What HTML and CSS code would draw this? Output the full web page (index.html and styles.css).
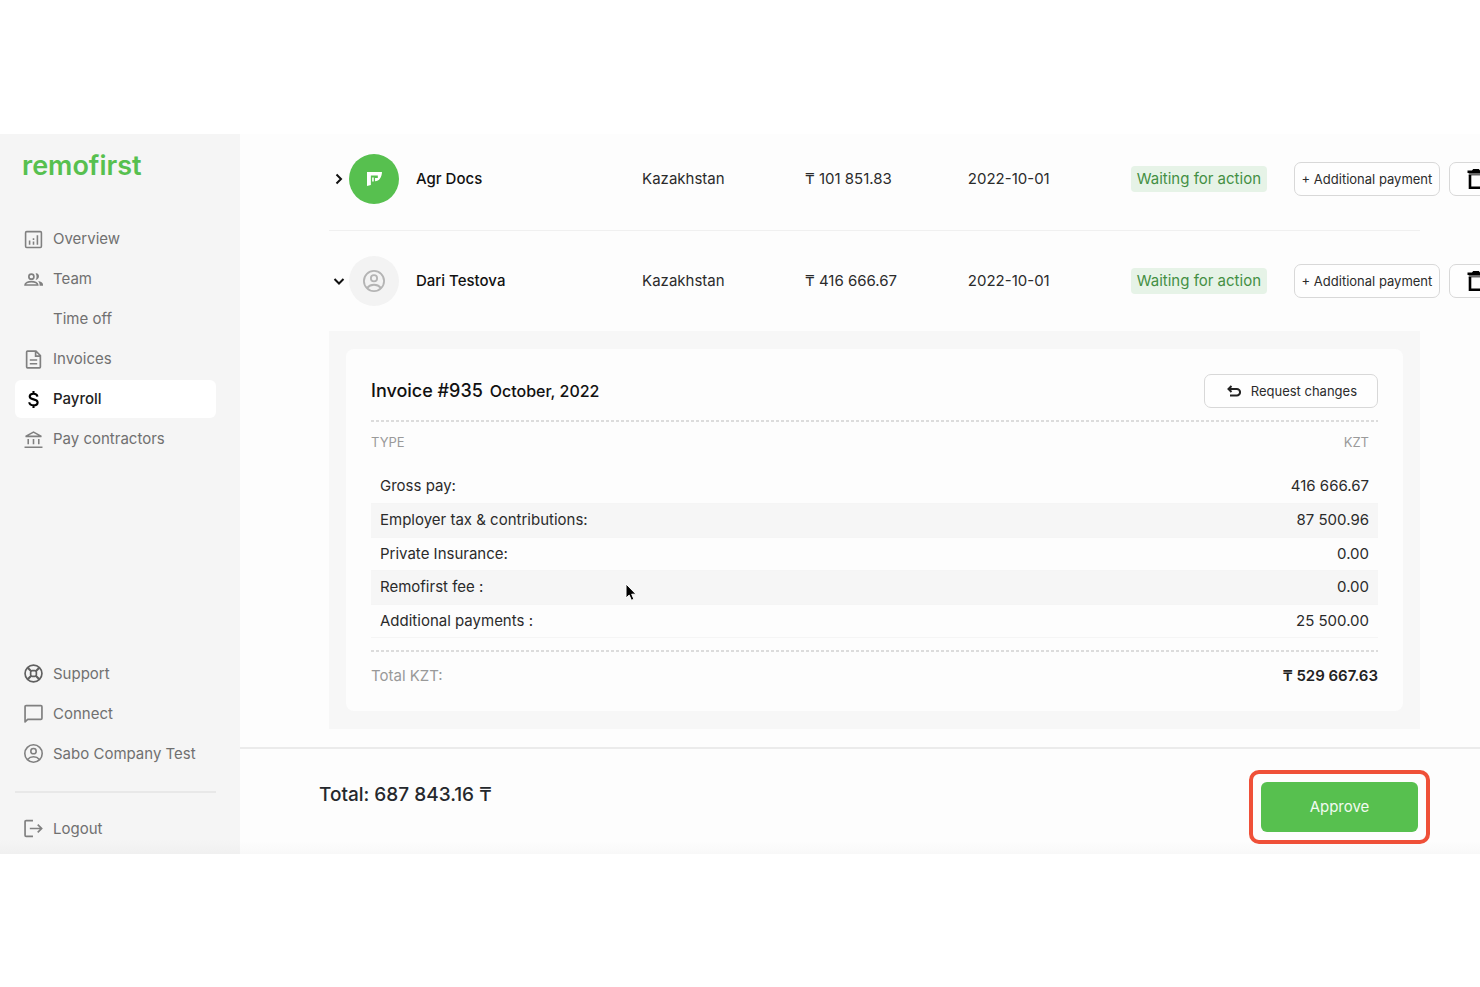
FILE: index.html
```html
<!DOCTYPE html>
<html lang="en">
<head>
<meta charset="utf-8">
<title>Payroll – Remofirst</title>
<link rel="stylesheet" href="styles.css">
</head>
<body>
<svg class="sprite" aria-hidden="true">
  <symbol id="user" viewBox="0 0 24 24"><g fill="none" stroke="currentColor" stroke-width="2"><circle cx="12" cy="12" r="11"/><circle cx="12" cy="9" r="3.4"/><path d="M4.5 19.5c2-2.300 4.500-3.400 7.500-3.400s5.500 1.100 7.500 3.400"/></g></symbol>
  <symbol id="trash" viewBox="0 0 20 22"><path fill="none" stroke="currentColor" stroke-width="2.600" d="M4 7v12.700h12V7"/><path fill="currentColor" d="M1.500 2.500H6L7.200 1h5.600L14 2.500h4.500v2.600h-17z"/><path fill="currentColor" opacity=".6" d="M2.700 5h14.600v2.500H2.700z"/></symbol>
</svg>
<div class="app">
  <aside class="sidebar">
    <a class="logo" href="#">remofirst</a>
    <nav class="nav" aria-label="Main">
      <a class="nav-item" href="#"><svg class="icon" viewBox="0 0 18 18"><g fill="none" stroke="currentColor" stroke-width="1.500"><rect x="1.500" y="1.500" width="15" height="15" rx="1"/><path d="M5.300 10v4M9 11v3M9 7.800v1.700M12.700 5v9"/></g></svg>Overview</a>
      <a class="nav-item" href="#"><svg class="icon" viewBox="0 0 18 18"><g fill="none" stroke="currentColor" stroke-width="1.600"><circle cx="7" cy="6.300" r="2.400"/><path d="M1 14.200c0-2 3-3.200 6-3.200s6 1.200 6 3.200z"/></g><path fill="currentColor" d="M11 3.200c4-.6 4.600 5.600 0 6.200 1.200-2 1.200-4.200 0-6.200zM13.300 10.500c2.800.3 4.700 1.700 4.700 3.300V15h-3.200c.1-1.800-.2-3.200-1.500-4.500z"/></svg>Team</a>
      <a class="nav-item nav-sub" href="#">Time off</a>
      <a class="nav-item" href="#"><svg class="icon" viewBox="0 0 18 18"><g fill="none" stroke="currentColor" stroke-width="1.600"><path d="M3.500 1h7.800l4.200 4.200V16.200a.8.800 0 0 1-.8.8H3.300a.8.800 0 0 1-.8-.8V1.800a.8.800 0 0 1 .8-.8zM11 1v4.800h4.500M5.500 9.500h7M5.500 13h7"/></g></svg>Invoices</a>
      <a class="nav-item active" href="#" aria-current="page"><svg class="icon" viewBox="0 0 18 18"><path fill="none" stroke="currentColor" stroke-width="2" d="M12.700 6.200C12.500 4.500 11 3.600 9 3.600c-2.200 0-3.600 1-3.600 2.600C5.400 10 12.900 7.800 12.900 11.800c0 1.700-1.600 2.700-3.900 2.700-2.200 0-3.800-1-4-2.900M9 1v3M9 14v3"/></svg>Payroll</a>
      <a class="nav-item" href="#"><svg class="icon" viewBox="0 0 18 18"><g fill="none" stroke="currentColor" stroke-width="1.500"><path d="M1.500 6 9 2l7.500 4zM4 8.500v5M9 8.500v5M14 8.500v5M.5 16.300h17"/></g></svg>Pay contractors</a>
    </nav>
    <nav class="nav nav-bottom" aria-label="Account">
      <a class="nav-item" href="#"><svg class="icon dark" viewBox="0 0 18 18"><g fill="none" stroke="currentColor" stroke-width="1.600"><circle cx="9" cy="9" r="8"/><rect x="6.300" y="6.300" width="5.400" height="5.400" rx="1.500"/><path stroke-width="2" d="m3.600 3.600 3.200 3.200M14.400 3.600l-3.200 3.200M3.600 14.400l3.200-3.200M14.400 14.400l-3.200-3.200"/></g></svg>Support</a>
      <a class="nav-item" href="#"><svg class="icon" viewBox="0 0 18 18"><path fill="none" stroke="currentColor" stroke-width="1.600" stroke-linejoin="round" d="M1 17V2.500a1 1 0 0 1 1-1h14a1 1 0 0 1 1 1v11a1 1 0 0 1-1 1H3.500z"/></svg>Connect</a>
      <a class="nav-item" href="#"><svg class="icon"><use href="#user"/></svg>Sabo Company Test</a>
    </nav>
    <div class="logout">
      <a class="nav-item" href="#"><svg class="icon" viewBox="0 0 18 18"><path fill="none" stroke="currentColor" stroke-width="1.600" d="M8.500 1.500H2a1 1 0 0 0-1 1v13a1 1 0 0 0 1 1h6.500M5.500 9h11M13 5.300 16.700 9 13 12.700"/></svg>Logout</a>
    </div>
  </aside>
  <main class="main">
    <div class="content">
      <table class="payroll">
        <colgroup><col class="col-name"><col class="col-data"><col class="col-data"><col class="col-data"><col class="col-data"><col></colgroup>
        <tbody>
          <tr class="person first">
            <td><div class="identity"><button class="toggle" aria-label="Expand Agr Docs"><svg viewBox="0 0 12 12"><path d="m3.500 1.500 4.500 4.500-4.500 4.500"/></svg></button><span class="avatar brand"><svg viewBox="0 0 14 13"><path fill="#fff" d="M0 0h14c-.3 5-2.500 8.500-6.500 8.500V5.500h2.600V3.200H3.600V12L0 13z"/><path fill="#fff" d="M4.800 5.200h1.500v3.600H4.800z"/></svg></span><span class="name">Agr Docs</span></div></td>
            <td>Kazakhstan</td><td>₸ 101 851.83</td><td>2022-10-01</td>
            <td><span class="tag">Waiting for action</span></td>
            <td><div class="actions"><button class="btn">+ Additional payment</button><button class="btn btn-trash" aria-label="Delete"><svg><use href="#trash"/></svg></button></div></td>
          </tr>
          <tr class="person">
            <td><div class="identity"><button class="toggle" aria-label="Collapse Dari Testova"><svg viewBox="0 0 12 12"><path d="M1.500 4 6 8.500 10.500 4"/></svg></button><span class="avatar"><svg class="avatar-user"><use href="#user"/></svg></span><span class="name">Dari Testova</span></div></td>
            <td>Kazakhstan</td><td>₸ 416 666.67</td><td>2022-10-01</td>
            <td><span class="tag">Waiting for action</span></td>
            <td><div class="actions"><button class="btn">+ Additional payment</button><button class="btn btn-trash" aria-label="Delete"><svg><use href="#trash"/></svg></button></div></td>
          </tr>
          <tr>
            <td class="details" colspan="6">
              <section class="invoice">
                <header class="invoice-head">
                  <h2 class="invoice-title">Invoice #935 <span class="period">October, 2022</span></h2>
                  <button class="btn btn-request"><svg viewBox="0 0 14 12"><path d="M4.500 1 1.500 4l3 3M1.500 4h8.300a3.200 3.200 0 0 1 0 6.500H3"/></svg>Request changes</button>
                </header>
                <div class="dashes"></div>
                <table class="lines">
                  <thead><tr><th scope="col">TYPE</th><th scope="col">KZT</th></tr></thead>
                  <tbody>
                    <tr><td>Gross pay:</td><td>416 666.67</td></tr>
                    <tr><td>Employer tax &amp; contributions:</td><td>87 500.96</td></tr>
                    <tr><td>Private Insurance:</td><td>0.00</td></tr>
                    <tr><td>Remofirst fee :</td><td>0.00</td></tr>
                    <tr><td>Additional payments :</td><td>25 500.00</td></tr>
                  </tbody>
                </table>
                <div class="dashes"></div>
                <div class="invoice-total"><span>Total KZT:</span><strong>₸ 529 667.63</strong></div>
              </section>
            </td>
          </tr>
        </tbody>
      </table>
    </div>
    <footer class="summary">
      <p class="grand-total">Total: 687 843.16 ₸</p>
      <div class="highlight"><button class="approve">Approve</button></div>
    </footer>
  </main>
</div>
<svg class="cursor" viewBox="0 0 12 19" aria-hidden="true"><path fill="#000" stroke="#fff" d="M1 1v14l3.200-2.900 2.200 5.200 2.500-1.100-2.200-5H11z"/></svg>
</body>
</html>
```
FILE: styles.css
```css
* { box-sizing: border-box; }
body {
  margin: 0;
  padding: 134px 0;
  background: #fff;
  color: #2b2b2b;
  font: 15px/20px Inter, "Noto Sans", sans-serif;
}
button { font: inherit; color: inherit; cursor: pointer; }
a { color: inherit; text-decoration: none; }
.sprite { display: none; }

.app { display: flex; background: #fdfdfd; overflow: hidden; }

/* Sidebar */
.sidebar {
  flex: 0 0 240px;
  display: flex;
  flex-direction: column;
  padding: 14px 24px 6px 15px;
  background: linear-gradient(#f5f5f5 98%, #f0f0f0);
}
.logo {
  padding-left: 7px;
  color: #57c04f;
  font-size: 27px;
  line-height: 36px;
  font-weight: 600;
  font-variant-ligatures: none;
}
.nav { display: flex; flex-direction: column; gap: 2px; margin-top: 36px; }
.nav-bottom { margin-top: auto; padding-bottom: 18px; }
.nav-item {
  display: flex;
  align-items: center;
  gap: 10px;
  height: 38px;
  padding-left: 9px;
  border-radius: 6px;
  color: #707070;
}
.nav-sub { padding-left: 38px; }
.nav-item.active { background: #fff; color: #222; font-weight: 500; }
.active .icon { color: #000; }
.icon { width: 19px; height: 19px; color: #808080; }
.icon.dark { color: #606060; }
.logout { border-top: 2px solid #e8e8e8; padding-top: 17px; }

/* Payroll list */
.main { flex: 1; min-width: 0; display: flex; flex-direction: column; }
.content { padding: 0 60px 18px 89px; }
.payroll { width: 100%; table-layout: fixed; border-collapse: collapse; }
.col-name { width: 28.700%; }
.col-data { width: 14.930%; }
td { padding: 0; text-align: left; }
.person > td { height: 101px; white-space: nowrap; }
.person.first > td { height: 96px; padding: 20px 0 25px; border-bottom: 1px solid #f0f0f0; }
.identity { display: flex; align-items: center; color: #111; font-weight: 500; }
.toggle { display: flex; padding: 0 4px; border: 0; background: none; }
.toggle svg { width: 12px; height: 12px; fill: none; stroke: #111; stroke-width: 2; }
.avatar {
  display: grid;
  place-items: center;
  width: 50px;
  height: 50px;
  margin-right: 17px;
  border-radius: 50%;
  background: #f3f3f3;
}
.brand { background: #57c04f; }
.brand svg { width: 15px; height: 14px; }
.avatar-user { width: 22px; height: 22px; color: #b4b4b4; }
.tag { display: inline-block; padding: 3px 6px; border-radius: 4px; background: #e6f3e7; color: #438f43; }
.actions { display: flex; gap: 9px; width: max-content; }
.btn {
  height: 34px;
  padding: 0 7px;
  border: 1px solid #d8d8d8;
  border-radius: 7px;
  background: #fefefe;
  font-size: 13px;
  white-space: nowrap;
}
.btn-trash { display: flex; align-items: center; padding: 0 16px; color: #000; }
.btn-trash svg { width: 20px; height: 22px; }

/* Invoice details */
.details { padding: 18px 17px; background: #f7f7f7; }
.invoice { padding: 25px; border-radius: 8px; background: #fdfdfd; }
.invoice-head { display: flex; align-items: center; justify-content: space-between; padding-bottom: 12px; }
.invoice-title { margin: 0; color: #111; font-size: 18px; font-weight: 500; }
.period { margin-left: 2px; font-size: 16px; }
.btn-request { display: flex; align-items: center; gap: 10px; padding: 0 20px 0 22px; }
.btn-request svg { width: 14px; height: 12px; fill: none; stroke: #222; stroke-width: 2; }
.dashes { height: 2px; background: repeating-linear-gradient(90deg, #dcdcdc 0 3px, transparent 3px 5px); }
.lines { width: 100%; margin-bottom: 12px; border-collapse: collapse; }
.lines th { padding: 10px 0 18px; color: #9a9a9a; font-size: 13px; line-height: 20px; font-weight: 400; text-align: left; }
.lines td { height: 33px; padding: 0 9px; border-bottom: 1px solid #f5f5f5; }
.lines th:last-child, .lines td:last-child { padding-right: 9px; text-align: right; }
.lines tbody tr:nth-child(even) { background: #f6f6f6; }
.lines tbody tr:nth-child(even) td { height: 34px; }
.invoice-total { display: flex; justify-content: space-between; padding: 14px 0 0; color: #999; }
.invoice-total strong { color: #222; font-weight: 600; }

/* Summary bar */
.summary {
  flex: 1;
  display: flex;
  align-items: flex-start;
  justify-content: space-between;
  padding: 21px 50px 10px 79px;
  border-top: 2px solid #ebebeb;
  background: linear-gradient(#fdfdfd 88%, #f8f8f8);
}
.grand-total { margin: 15px 0 0; color: #25282c; font-size: 19px; font-weight: 500; }
.highlight { padding: 8px; border: 4px solid #ef5038; border-radius: 10px; }
.approve { display: block; width: 157px; height: 50px; border: 0; border-radius: 6px; background: #57c04f; color: #f1faf0; }

/* Pointer over the invoice */
.cursor { position: absolute; left: 625px; top: 583px; width: 12px; height: 19px; }
```
